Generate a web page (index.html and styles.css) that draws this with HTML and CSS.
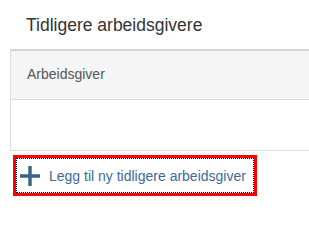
FILE: index.html
```html
<!DOCTYPE html>
<html lang="no">
<head>
    <meta charset="UTF-8">
    <title>Tidligere arbeidsgivere</title>
    <link rel="stylesheet" href="styles.css">
</head>
<body>
    <div class="panel">
        <h2 class="title">Tidligere arbeidsgivere</h2>
        <div class="table">
            <div class="table-head">Arbeidsgiver</div>
            <div class="table-row"></div>
        </div>
        <div class="marker">
            <button class="add-btn">
                <svg class="plus" width="20" height="20" viewBox="0 0 20 20">
                    <path d="M10 0V20M0 10H20" stroke="#3b6087" stroke-width="3.4" fill="none"/>
                </svg>
                <span>Legg til ny tidligere arbeidsgiver</span>
            </button>
        </div>
    </div>
</body>
</html>
```

FILE: styles.css
```css
body {
    margin: 0;
    background: #fff;
    font-family: "Liberation Sans", Arial, sans-serif;
    overflow: hidden;
}
.title {
    margin: 0;
    padding: 15px 0 0 26px;
    height: 35px;
    box-sizing: border-box;
    font-size: 17.5px;
    font-weight: normal;
    color: #333;
    line-height: 20px;
}
.table {
    margin: 14px 0 0 10px;
    border-left: 1px solid #ddd;
}
.table-head {
    height: 48px;
    border-top: 2px solid #d4d4d4;
    border-bottom: 1px solid #ddd;
    background: #f5f5f5;
    padding-left: 16px;
    font-size: 14px;
    color: #555;
    line-height: 47px;
}
.table-row {
    height: 50px;
    border-bottom: 1px solid #ddd;
}
.marker {
    display: inline-block;
    margin: 4px 0 0 13px;
    border: 3px solid #f00;
}
.add-btn {
    display: flex;
    align-items: center;
    width: 238px;
    height: 35px;
    margin: 0;
    padding: 0 0 0 3px;
    border: 1px dotted #000;
    background: #fff;
    font-family: "Liberation Sans", Arial, sans-serif;
    font-size: 14px;
    color: #3d6a96;
    cursor: pointer;
}
.plus {
    flex: none;
    margin-right: 9px;
}
```
